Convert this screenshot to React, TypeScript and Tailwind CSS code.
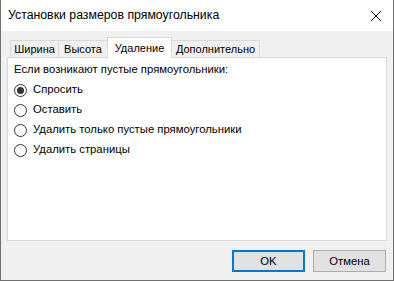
import React from "react";

const font = { fontFamily: '"Liberation Sans", Arial, sans-serif' };

function Radio({ checked, label }: { checked?: boolean; label: string }) {
  return (
    <div className="flex items-center h-[20px]">
      <span className="w-[13px] h-[13px] rounded-full border border-[#333333] bg-white flex items-center justify-center">
        {checked && <span className="w-[7px] h-[7px] rounded-full bg-[#333333]" />}
      </span>
      <span className="ml-[6px] text-[11.3px] text-black leading-none">{label}</span>
    </div>
  );
}

export default function App() {
  return (
    <div
      className="w-[394px] h-[281px] flex flex-col bg-[#f0f0f0] border-x border-b border-[#707070] box-border overflow-hidden"
      style={font}
    >
      <div className="h-[31px] bg-white flex items-center justify-between pl-[7px] pr-[10px] shrink-0">
        <span className="text-[12.3px] text-black">Установки размеров прямоугольника</span>
        <svg width="12" height="12" viewBox="0 0 12 12" className="mr-[1px]">
          <path d="M1 1 L11 11 M11 1 L1 11" stroke="#111" strokeWidth="1" />
        </svg>
      </div>
      <div className="flex-1 flex flex-col px-[6px] pt-[5px]">
        <div className="flex items-end h-[21px] pl-[3px] relative z-10">
          <div className="w-[49px] h-[17px] bg-[#f0f0f0] border border-b-0 border-[#d9d9d9] flex items-center justify-center text-[11px] text-black">
            Ширина
          </div>
          <div className="w-[49px] h-[17px] bg-[#f0f0f0] border border-b-0 border-l-0 border-[#d9d9d9] flex items-center justify-center text-[11px] text-black">
            Высота
          </div>
          <div className="w-[65px] h-[21px] -mb-px ml-[-1px] bg-white border border-b-0 border-[#d9d9d9] flex items-center justify-center text-[11px] text-black relative z-10">
            Удаление
          </div>
          <div className="w-[88px] h-[17px] bg-[#f0f0f0] border border-b-0 border-l-0 border-[#d9d9d9] flex items-center justify-center text-[11px] text-black">
            Дополнительно
          </div>
        </div>
        <div className="h-[184px] bg-white border border-[#d9d9d9] px-[6px] pt-[2px]">
          <div className="text-[11.3px] text-black h-[18px] flex items-center">
            Если возникают пустые прямоугольники:
          </div>
          <div className="flex flex-col pt-[2px]">
            <Radio checked label="Спросить" />
            <Radio label="Оставить" />
            <Radio label="Удалить только пустые прямоугольники" />
            <Radio label="Удалить страницы" />
          </div>
        </div>
        <div className="flex justify-end gap-[8px] pt-[9px] pr-[1px]">
          <button className="w-[73px] h-[22px] bg-[#e1e1e1] border-2 border-[#0078d7] text-[11.3px] text-black flex items-center justify-center">
            OK
          </button>
          <button className="w-[73px] h-[22px] bg-[#e1e1e1] border border-[#adadad] text-[11.3px] text-black flex items-center justify-center">
            Отмена
          </button>
        </div>
      </div>
    </div>
  );
}
